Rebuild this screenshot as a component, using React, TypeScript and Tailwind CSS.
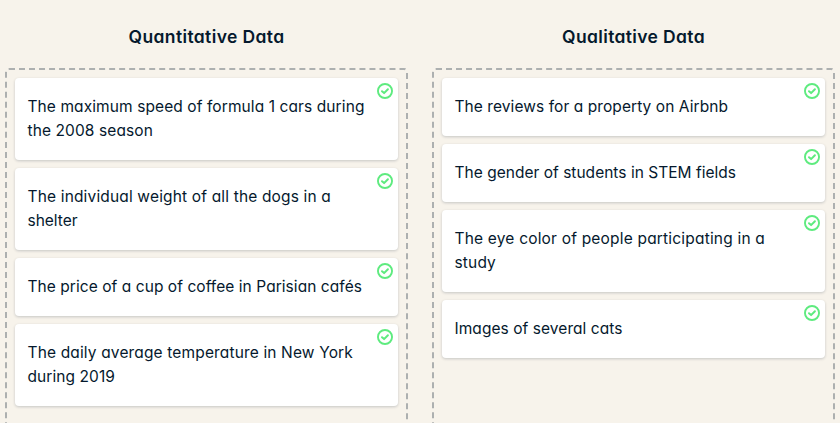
import React from "react";

type Line = { text: string; width: number };
type Item = Line[];

const quantitative: Item[] = [
  [{ text: "The maximum speed of formula 1 cars during", width: 337 }, { text: "the 2008 season", width: 125.5 }],
  [{ text: "The individual weight of all the dogs in a", width: 303.5 }, { text: "shelter", width: 50 }],
  [{ text: "The price of a cup of coffee in Parisian cafés", width: 334.5 }],
  [{ text: "The daily average temperature in New York", width: 325.5 }, { text: "during 2019", width: 87.5 }],
];

const qualitative: Item[] = [
  [{ text: "The reviews for a property on Airbnb", width: 273.5 }],
  [{ text: "The gender of students in STEM fields", width: 281.5 }],
  [{ text: "The eye color of people participating in a", width: 310.5 }, { text: "study", width: 41.5 }],
  [{ text: "Images of several cats", width: 168 }],
];

function FitText({ text, width }: Line) {
  const ref = React.useRef<HTMLSpanElement>(null);
  const [spacing, setSpacing] = React.useState(0);
  React.useLayoutEffect(() => {
    if (ref.current) setSpacing((width - ref.current.getBoundingClientRect().width) / text.length);
  }, [text, width]);
  return (
    <span ref={ref} className="inline-block whitespace-nowrap" style={{ letterSpacing: `${spacing}px` }}>
      {text}
    </span>
  );
}

function CheckCircle() {
  return (
    <svg className="absolute right-[5px] top-[5px] size-4" viewBox="0 0 16 16" fill="none" stroke="#5eeb7f">
      <circle cx="8" cy="8" r="7.05" strokeWidth="1.9" />
      <path d="M5 8.2 7.1 10.1 10.9 6.2" strokeWidth="2" strokeLinecap="round" strokeLinejoin="round" />
    </svg>
  );
}

function Column({ title, items, titleWidth }: { title: string; items: Item[]; titleWidth: number }) {
  return (
    <section className="w-[403px] shrink-0">
      <h2 className="mb-[19px] flex h-6 justify-center text-[17.5px] font-semibold leading-[23px]">
        <FitText text={title} width={titleWidth} />
      </h2>
      <div className="flex h-[400px] flex-col gap-2 rounded border-2 border-dashed border-[#adb0b0] p-2">
        {items.map((item) => (
          <div key={item[0].text} className="relative rounded bg-white px-[12.5px] py-[17px] shadow-[0_1px_3px_rgba(5,25,45,0.2)]">
            {item.map((line) => (
              <p key={line.text} className="h-6 leading-6">
                <FitText {...line} />
              </p>
            ))}
            <CheckCircle />
          </div>
        ))}
      </div>
    </section>
  );
}

export default function App() {
  return (
    <main className="flex h-[423px] gap-6 overflow-hidden bg-[#f7f3eb] pl-[5px] pt-[25px] font-['Inter',sans-serif] text-[15.5px] text-[#05192d] [font-feature-settings:'cv11']">
      <Column title="Quantitative Data" items={quantitative} titleWidth={156} />
      <Column title="Qualitative Data" items={qualitative} titleWidth={143} />
    </main>
  );
}
